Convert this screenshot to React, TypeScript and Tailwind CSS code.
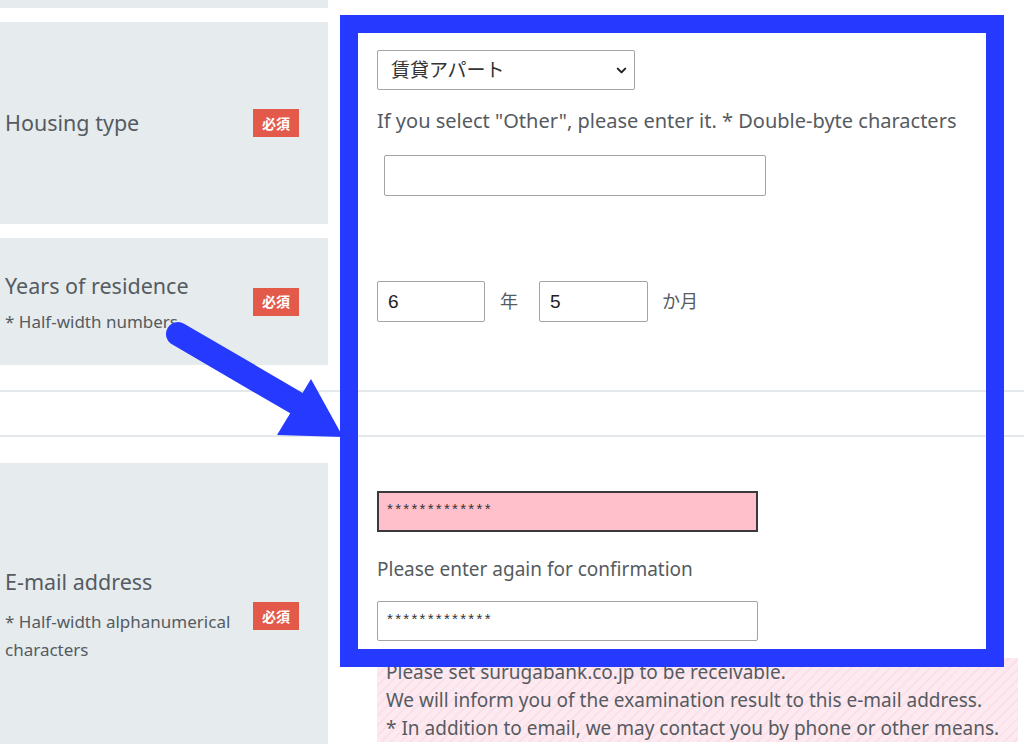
import { ChevronDown } from 'lucide-react';

const font = "font-['Noto_Sans','Noto_Sans_CJK_JP',sans-serif]";

const Badge = () => (
    <span className="flex h-[28px] w-[46px] shrink-0 items-center justify-center bg-[#e35a4b] text-[14px] font-bold text-white">
        必須
    </span>
);

const Divider = () => <div className="h-[2px] w-full bg-[#e4e8eb]" />;

const App = () => {
    return (
        <div className={`relative h-[744px] w-[1024px] overflow-hidden bg-white text-[#555b61] ${font}`}>
            <div className="h-[8px] w-[328px] bg-[#e6ebee]" />
            <div className="h-[14px]" />

            {/* Housing type */}
            <div className="flex h-[202px]">
                <div className="flex w-[328px] shrink-0 items-center justify-between bg-[#e6ebee] pl-[5px] pr-[29px]">
                    <span className="text-[21.5px] leading-[28px]">Housing type</span>
                    <Badge />
                </div>
                <div className="flex flex-col items-start pl-[49px] pt-[28px]">
                    <div className="relative">
                        <select
                            defaultValue="apt"
                            className="h-[40px] w-[258px] appearance-none rounded-[2px] border border-[#a4a4a4] bg-white pl-[13px] text-[19px] text-[#333]"
                        >
                            <option value="apt">賃貸アパート</option>
                        </select>
                        <ChevronDown className="pointer-events-none absolute right-[6px] top-[13px] h-[15px] w-[15px] text-[#222]" strokeWidth={3.2} />
                    </div>
                    <p className="mt-[17px] whitespace-nowrap text-[20px] leading-[28px]">
                        If you select "Other", please enter it. * Double-byte characters
                    </p>
                    <input
                        type="text"
                        className="ml-[7px] mt-[20px] h-[41px] w-[382px] rounded-[2px] border border-[#a4a4a4] bg-white"
                    />
                </div>
            </div>

            <div className="h-[14px]" />

            {/* Years of residence */}
            <div className="flex h-[127px]">
                <div className="flex w-[328px] shrink-0 items-center justify-between bg-[#e6ebee] pl-[5px] pr-[29px]">
                    <div className="flex flex-col">
                        <span className="text-[21.5px] leading-[28px]">Years of residence</span>
                        <span className="mt-[12px] text-[17px] leading-[20px]">* Half-width numbers</span>
                    </div>
                    <Badge />
                </div>
                <div className="flex items-center pl-[49px]">
                    <input
                        type="text"
                        defaultValue="6"
                        className="h-[41px] w-[108px] rounded-[2px] border border-[#a4a4a4] bg-white pl-[10px] font-['Liberation_Sans',sans-serif] text-[19px] text-[#222]"
                    />
                    <span className="ml-[15px] mr-[21px] text-[18px]">年</span>
                    <input
                        type="text"
                        defaultValue="5"
                        className="h-[41px] w-[109px] rounded-[2px] border border-[#a4a4a4] bg-white pl-[10px] font-['Liberation_Sans',sans-serif] text-[19px] text-[#222]"
                    />
                    <span className="ml-[14px] text-[18px]">か月</span>
                </div>
            </div>

            <div className="h-[25px]" />
            <Divider />
            <div className="h-[43px]" />
            <Divider />
            <div className="h-[26px]" />

            {/* E-mail address */}
            <div className="flex h-[306px]">
                <div className="flex w-[328px] shrink-0 items-center justify-between bg-[#e6ebee] pl-[5px] pr-[29px]">
                    <div className="flex w-[240px] flex-col">
                        <span className="text-[21.5px] leading-[28px]">E-mail address</span>
                        <span className="mt-[12px] text-[17px] leading-[28px]">
                            * Half-width alphanumerical characters
                        </span>
                    </div>
                    <Badge />
                </div>
                <div className="flex flex-col items-start pl-[49px] pt-[28px]">
                    <input
                        type="text"
                        readOnly
                        value="*************"
                        className="h-[41px] w-[381px] border-2 border-[#3a3a3a] bg-[#ffc0cb] pb-[6px] pl-[8px] font-['Liberation_Sans',sans-serif] text-[15px] tracking-[2.3px] text-[#333]"
                    />
                    <p className="mt-[23px] text-[19px] leading-[28px]">Please enter again for confirmation</p>
                    <input
                        type="text"
                        readOnly
                        value="*************"
                        className="mt-[18px] h-[40px] w-[381px] rounded-[2px] border border-[#a4a4a4] bg-white pb-[6px] pl-[9px] font-['Liberation_Sans',sans-serif] text-[15px] tracking-[2.3px] text-[#333]"
                    />
                    <div className="mt-[17px] w-[641px] whitespace-nowrap bg-[repeating-linear-gradient(135deg,#fde9f0_0px,#fde9f0_5px,#fbe0ea_5px,#fbe0ea_7px)] px-[9px] text-[19px] leading-[28px]">
                        <p>Please set surugabank.co.jp to be receivable.</p>
                        <p>We will inform you of the examination result to this e-mail address.</p>
                        <p>* In addition to email, we may contact you by phone or other means.</p>
                    </div>
                </div>
            </div>

            {/* annotation: highlight box */}
            <div className="pointer-events-none absolute left-[340px] top-[15px] h-[652px] w-[664px] border-[18px] border-[#2539ff]" />

            {/* annotation: arrow */}
            <svg className="pointer-events-none absolute left-0 top-0" width="1024" height="744" viewBox="0 0 1024 744">
                <line x1="178" y1="334" x2="298" y2="404" stroke="#2539ff" strokeWidth="24" strokeLinecap="round" />
                <polygon points="277,435 311,379 343,437" fill="#2539ff" />
            </svg>
        </div>
    );
};

export default App;
